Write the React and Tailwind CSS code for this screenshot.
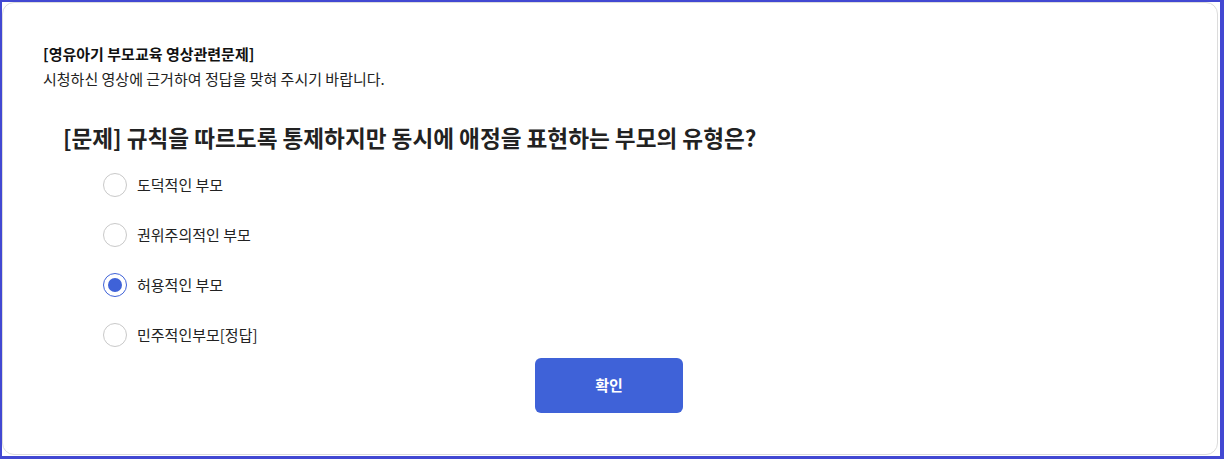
import { useState } from "react";

const options = ["도덕적인 부모", "권위주의적인 부모", "허용적인 부모", "민주적인부모[정답]"];

const App = () => {
  const [selected, setSelected] = useState(2);

  return (
    <div
      className="w-[1224px] h-[459px] bg-white border-t-2 border-l-2 border-r-4 border-b-[3px] border-[#4248d2] flex"
      style={{ fontFamily: '"Noto Sans CJK KR", "Noto Sans", sans-serif' }}
    >
      <div className="flex-1 mr-[2px] mb-[1px] border border-[#dcdcdc] rounded-xl bg-white pl-10 pt-[41px] text-[#222]">
        <p className="text-[15px] font-bold leading-[20px] text-[#111]">[영유아기 부모교육 영상관련문제]</p>
        <p className="text-[15px] leading-[20px] mt-[5px] text-[#222]">시청하신 영상에 근거하여 정답을 맞혀 주시기 바랍니다.</p>

        <h2 className="ml-5 mt-[34px] text-[22.6px] font-bold leading-[30px] text-[#222]">
          [문제] 규칙을 따르도록 통제하지만 동시에 애정을 표현하는 부모의 유형은?
        </h2>

        <div className="ml-[60px] mt-[20px] flex flex-col gap-[26px]">
          {options.map((label, i) => (
            <label key={label} className="flex items-center gap-[10px] cursor-pointer h-[24px]">
              <span
                onClick={() => setSelected(i)}
                className={`w-[24px] h-[24px] rounded-full border flex items-center justify-center ${
                  selected === i ? "border-[#3f62d8]" : "border-[#c9c9c9]"
                }`}
              >
                {selected === i && <span className="w-[14px] h-[14px] rounded-full bg-[#3f62d8]" />}
              </span>
              <span className="text-[15px] text-[#222]">{label}</span>
            </label>
          ))}
        </div>

        <div className="flex justify-center mt-[11px] pr-[42px]">
          <button className="w-[148px] h-[55px] rounded-md bg-[#3f62d8] text-white text-[15px] font-bold">
            확인
          </button>
        </div>
      </div>
    </div>
  );
};

export default App;
